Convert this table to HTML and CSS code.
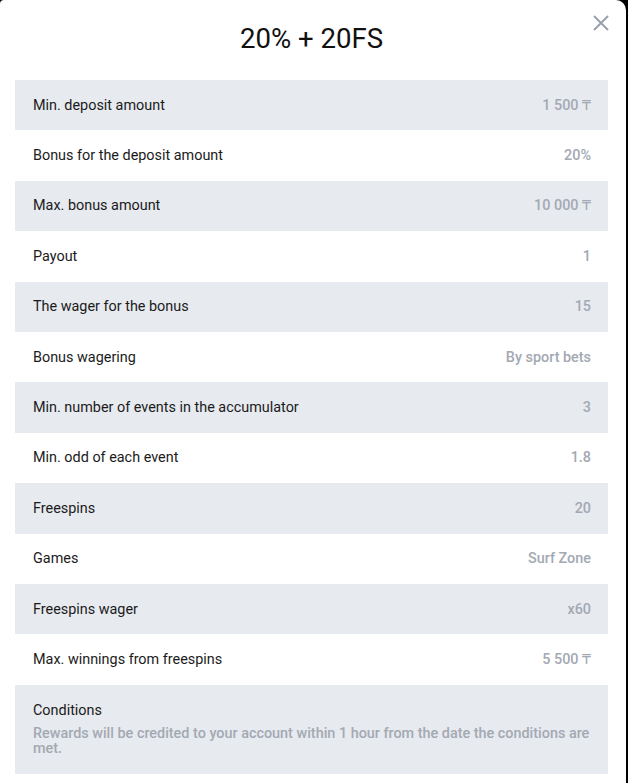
FILE: index.html
```html
<!DOCTYPE html>
<html lang="en">
<head>
  <meta charset="UTF-8" />
  <meta name="viewport" content="width=device-width, initial-scale=1" />
  <title>Bonus 20% + 20FS</title>
  <link rel="stylesheet" href="styles.css">
</head>
<body>

<div class="modal">
  <button class="close" title="Close">
    <svg width="16" height="16" viewBox="0 0 16 16"><path d="M1 1L15 15M15 1L1 15" stroke="#9aa1ad" stroke-width="2" fill="none"/></svg>
  </button>

  <h1 class="title">20% + 20FS</h1>

  <div class="rows">
    <div class="row"><span class="label">Min. deposit amount</span><span class="value">1 500 <span class="cur">₸</span></span></div>
    <div class="row"><span class="label">Bonus for the deposit amount</span><span class="value">20%</span></div>
    <div class="row"><span class="label">Max. bonus amount</span><span class="value">10 000 <span class="cur">₸</span></span></div>
    <div class="row"><span class="label">Payout</span><span class="value">1</span></div>
    <div class="row"><span class="label">The wager for the bonus</span><span class="value">15</span></div>
    <div class="row"><span class="label">Bonus wagering</span><span class="value">By sport bets</span></div>
    <div class="row"><span class="label">Min. number of events in the accumulator</span><span class="value">3</span></div>
    <div class="row"><span class="label">Min. odd of each event</span><span class="value">1.8</span></div>
    <div class="row"><span class="label">Freespins</span><span class="value">20</span></div>
    <div class="row"><span class="label">Games</span><span class="value">Surf Zone</span></div>
    <div class="row"><span class="label">Freespins wager</span><span class="value">x60</span></div>
    <div class="row"><span class="label">Max. winnings from freespins</span><span class="value">5 500 <span class="cur">₸</span></span></div>
    <div class="row conditions">
      <span class="label">Conditions</span>
      <p class="note">Rewards will be credited to your account within 1 hour from the date the conditions are met.</p>
    </div>
  </div>
</div>

</body>
</html>
```

FILE: styles.css
```css
body {
  margin: 0;
  background: #000;
  font-family: Roboto, 'Liberation Sans', sans-serif;
  height: 783px;
  overflow: hidden;
}

.modal {
  width: 626px;
  min-height: 783px;
  background: #fff;
  border-radius: 4px 10px 0 0;
  box-sizing: border-box;
  padding: 0 18px 0 15px;
  position: relative;
}

.close {
  position: absolute;
  top: 15px;
  right: 17px;
  width: 16px;
  height: 16px;
  padding: 0;
  border: none;
  background: none;
  cursor: pointer;
}

.close svg {
  display: block;
}

.title {
  margin: 0;
  height: 80px;
  line-height: 78px;
  text-align: center;
  font-size: 27.6px;
  font-weight: 400;
  color: #111;
}

.rows {
  display: flex;
  flex-direction: column;
}

.row {
  display: flex;
  justify-content: space-between;
  align-items: center;
  height: 50.4px;
  padding: 0 17px 0 18px;
  font-size: 14.4px;
}

.row:nth-child(odd) {
  background: #e7eaef;
}

.label {
  color: #1b1b1b;
}

.value {
  color: #a3a9b3;
  font-weight: 500;
}

.cur {
  font-family: 'DejaVu Sans', sans-serif;
  font-weight: 400;
  font-size: 14px;
}

.conditions {
  height: auto;
  flex-direction: column;
  align-items: flex-start;
  justify-content: flex-start;
  padding-top: 17px;
  padding-bottom: 18px;
}

.note {
  margin: 7px 0 0;
  color: #a3a9b3;
  font-weight: 500;
  line-height: 15px;
}
```
